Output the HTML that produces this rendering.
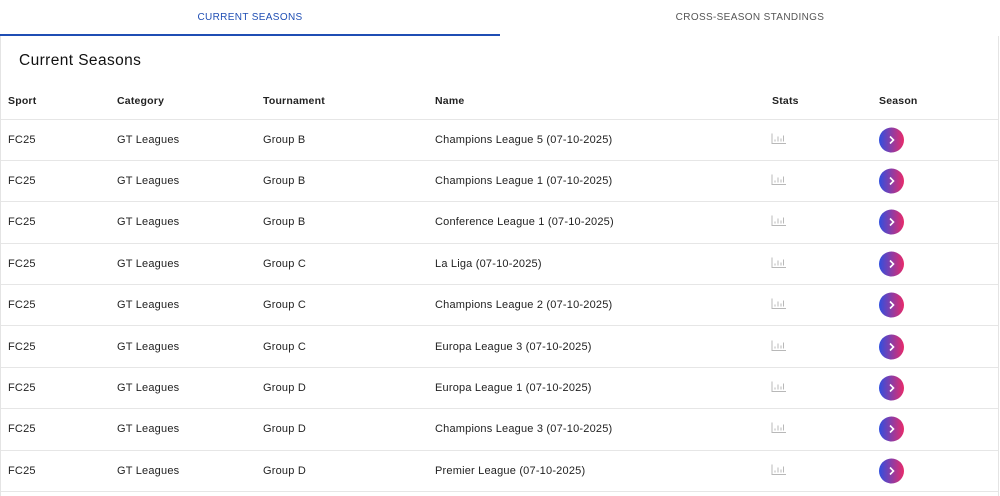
<!DOCTYPE html>
<html><head><meta charset="utf-8"><style>
*{margin:0;padding:0;box-sizing:border-box}
body{width:1000px;height:494px;background:#fff;font-family:"Liberation Sans",sans-serif;color:#222;position:relative;overflow:hidden}
.frame{position:absolute;left:0;top:36px;width:999px;height:460px;border-left:1px solid #e4e4e4;border-right:1px solid #e4e4e4}
.tab{position:absolute;top:1px;height:35px;width:500px;text-align:center;font-size:10px;line-height:34px;letter-spacing:.35px}
.t1{left:0;color:#1f4eb4;border-bottom:2px solid #1f4eb4}
.t2{left:500px;color:#555}
h1{position:absolute;left:19px;top:52px;font-size:15.5px;font-weight:normal;color:#111;letter-spacing:.4px}
.row{position:absolute;left:1px;width:997px;height:41.4px;border-bottom:1px solid #e6e6e6;font-size:11px;letter-spacing:.2px}
.row span{position:absolute;top:50%;transform:translateY(-50%);white-space:nowrap}
.hd{font-weight:bold;color:#222;font-size:10.5px}
.btn{width:25px;height:25px;border-radius:50%;background:linear-gradient(90deg,#2f4fe0,#e82a6a);color:#fff;text-align:center}
.btn svg{display:block;margin:7px auto 0}
</style></head><body>
<div class="tab t1">CURRENT SEASONS</div>
<div class="tab t2">CROSS-SEASON STANDINGS</div>
<div class="frame"></div>
<h1>Current Seasons</h1>
<div class="row hd" style="top:83px;height:37px"><span style="left:7px">Sport</span><span style="left:116px">Category</span><span style="left:262px">Tournament</span><span style="left:434px">Name</span><span style="left:771px">Stats</span><span style="left:878px">Season</span></div>
<div id="rows"></div>
<script>
var d=[["B","Champions League 5"],["B","Champions League 1"],["B","Conference League 1"],["C","La Liga"],["C","Champions League 2"],["C","Europa League 3"],["D","Europa League 1"],["D","Champions League 3"],["D","Premier League"]];
var h="";
d.forEach(function(r,i){var t=119.5+i*41.4;
h+='<div class="row" style="top:'+t+'px"><span style="left:7px">FC25</span><span style="left:116px">GT Leagues</span><span style="left:262px">Group '+r[0]+'</span><span style="left:434px">'+r[1]+' (07-10-2025)</span><span style="left:770px"><svg width="16" height="12" viewBox="0 0 16 12"><path d="M1 1V11H15M4 9V7M7 9V4M10 9V6M12.5 9V3" stroke="#b8b8b8" stroke-width="1" fill="none"/></svg></span><span class="btn" style="left:878px"><svg width="11" height="11" viewBox="0 0 11 11"><path d="M4 2L7.5 5.5L4 9" stroke="#fff" stroke-width="1.6" fill="none"/></svg></span></div>';});
document.getElementById("rows").innerHTML=h;
</script>
</body></html>
